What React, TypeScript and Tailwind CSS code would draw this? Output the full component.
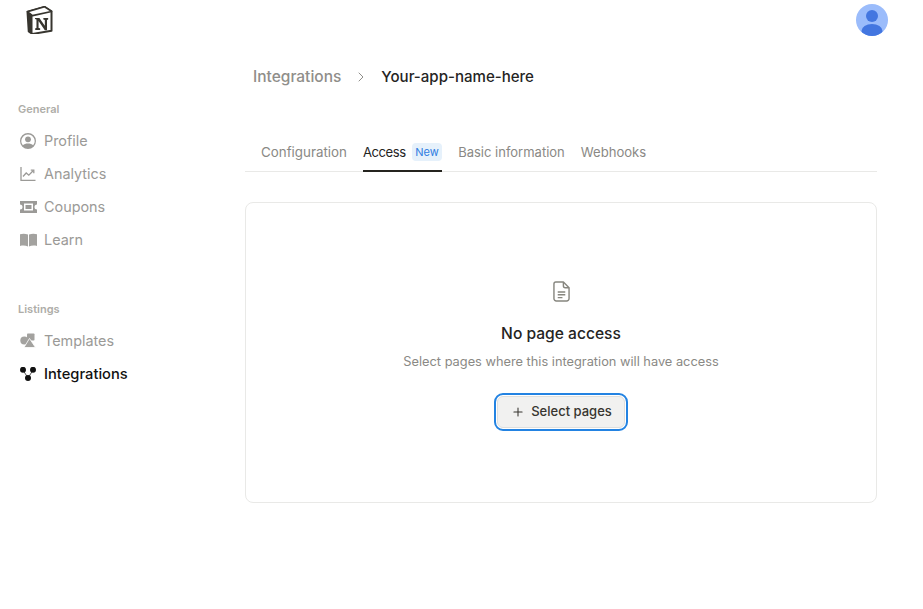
import { ChevronRight, Plus } from "lucide-react";
import type { ReactNode } from "react";

const font = { fontFamily: "Inter, 'Liberation Sans', sans-serif" };

function NotionLogo() {
  return (
    <svg viewBox="1.200 0.200 25 26.800" className="h-[28px] w-[27px]" aria-hidden>
      <path d="M2.200 5.600 18.600 1l6.600 4.400v18.400L7 27l-3.600-2.400z" fill="#fff" stroke="#37352f" strokeWidth="1.900" strokeLinejoin="round" />
      <path d="M2.200 5.600 7 9.400 25.200 5.400 18.600 1z" fill="#fff" stroke="#37352f" strokeWidth="1.500" strokeLinejoin="round" />
      <path d="M2.200 5.600 7 9.400V27l-3.600-2.400z" fill="#37352f" />
      <path d="M9.400 11.600h4.200l5.200 7.600v-5.700l-1.400-.3v-1.600h4.600v1.600l-1.100.3v10h-2.100l-6-8.900v6.600l1.500.4v1.500H9.600v-1.500l1.200-.4v-8.100l-1.400-.4z" fill="#37352f" />
    </svg>
  );
}

function ProfileIcon() {
  return (
    <svg viewBox="0 0 16 16" className="size-4" fill="#9b9a97" aria-hidden>
      <path fillRule="evenodd" d="M8 0a8 8 0 1 0 0 16A8 8 0 0 0 8 0Zm0 1.400a6.600 6.600 0 0 1 5.100 10.800C12 11 10.200 10.400 8 10.400s-4 .6-5.100 1.800A6.600 6.600 0 0 1 8 1.400Z" />
      <circle cx="8" cy="6.300" r="2.900" />
    </svg>
  );
}

function AnalyticsIcon() {
  return (
    <svg viewBox="0 0 16 16" className="size-4" fill="none" stroke="#9b9a97" strokeWidth="1.300" aria-hidden>
      <path d="M1 1v13.400h14.500" />
      <path d="M3 10.500 6.200 7l2.600 2.200 4.600-4.700" />
      <path d="M10.800 4.200h3v3" />
    </svg>
  );
}

function CouponIcon() {
  return (
    <svg viewBox="0 0 17 12" className="h-[12px] w-[17px]" aria-hidden>
      <path fillRule="evenodd" fill="#9b9a97" d="M0 0h17v3.500a2.500 2.500 0 0 0 0 5V12H0V8.500a2.500 2.500 0 0 0 0-5Zm4 2.500v7h9v-7Z" />
      <rect x="5.500" y="4" width="6" height="4" fill="#9b9a97" />
    </svg>
  );
}

function BookIcon() {
  return (
    <svg viewBox="0 0 17 14" className="h-[14px] w-[17px]" fill="#a3a29f" aria-hidden>
      <path d="M0 1.200C2.500.4 5.600.4 8 1.600v11.800c-2.400-1-5.500-1-8-.4Z" />
      <path d="M17 1.200C14.500.4 11.400.4 9 1.600v11.800c2.400-1 5.500-1 8-.4Z" />
    </svg>
  );
}

function TemplatesIcon() {
  return (
    <svg viewBox="0 0 16 15" className="h-[15px] w-4" fill="#a3a29f" aria-hidden>
      <circle cx="4.300" cy="7.500" r="4" />
      <rect x="7" y="0.500" width="7.500" height="7" rx="0.800" />
      <path d="M9.500 5.400 15.500 14.500H4z" stroke="#fff" strokeWidth="0.800" />
    </svg>
  );
}

function IntegrationsIcon() {
  return (
    <svg viewBox="0 0 16 14" className="h-[14px] w-4" aria-hidden>
      <path d="M2.800 2.800 8 11 13.200 2.800" stroke="#555" strokeWidth="1" fill="none" />
      <circle cx="3" cy="2.800" r="3" fill="#111" />
      <circle cx="13" cy="2.800" r="3" fill="#111" />
      <circle cx="8" cy="11" r="3" fill="#111" />
    </svg>
  );
}

function PageIcon() {
  return (
    <svg viewBox="0 0 18 22" className="h-[21px] w-[17px]" fill="none" stroke="#87867f" strokeWidth="1.500" strokeLinejoin="round" aria-hidden>
      <path d="M3 1h8l6 6v11.500a2.500 2.500 0 0 1-2.500 2.500h-11A2.500 2.500 0 0 1 1 18.500V3a2 2 0 0 1 2-2Z" />
      <path d="M11 1v4a2 2 0 0 0 2 2h4" />
      <path d="M5 11.500h8M5 14.500h8M5 17.500h5" />
    </svg>
  );
}

function Avatar() {
  return (
    <svg viewBox="0 0 32 32" className="size-8" aria-hidden>
      <defs>
        <clipPath id="avatar-clip">
          <circle cx="16" cy="16" r="16" />
        </clipPath>
      </defs>
      <circle cx="16" cy="16" r="16" fill="#9bbcfb" />
      <g clipPath="url(#avatar-clip)" fill="#4376e0">
        <circle cx="16" cy="12" r="6" />
        <ellipse cx="16" cy="27" rx="10.500" ry="7" />
      </g>
    </svg>
  );
}

function NavItem({ icon, label, active }: { icon: ReactNode; label: string; active?: boolean }) {
  return (
    <a className={`flex h-[33px] items-center gap-[7px] ${active ? "pt-[1px] text-[14.700px] font-medium text-[#111111]" : "text-[14.400px] text-[#9b9a97]"}`}>
      <span className="ml-[1px] flex w-[18px] shrink-0 justify-center">{icon}</span>
      {label}
    </a>
  );
}

function NavHeading({ children }: { children: ReactNode }) {
  return <div className="mb-[7px] flex h-[16px] items-center text-[11px] font-semibold text-[#aeada8]">{children}</div>;
}

export default function App() {
  return (
    <div className="flex min-h-screen flex-col bg-white" style={font}>
      <header className="flex h-[40px] items-center justify-between pl-[26px] pr-[35px]">
        <NotionLogo />
        <Avatar />
      </header>
      <div className="flex">
        <aside className="w-[245px] shrink-0 pl-[18px] pt-[61px]">
          <NavHeading>General</NavHeading>
          <NavItem icon={<ProfileIcon />} label="Profile" />
          <NavItem icon={<AnalyticsIcon />} label="Analytics" />
          <NavItem icon={<CouponIcon />} label="Coupons" />
          <NavItem icon={<BookIcon />} label="Learn" />
          <div className="h-[45px]" />
          <NavHeading>Listings</NavHeading>
          <NavItem icon={<TemplatesIcon />} label="Templates" />
          <NavItem icon={<IntegrationsIcon />} label="Integrations" active />
        </aside>
        <main className="w-[632px] shrink-0">
          <nav className="mt-[25px] flex h-[24px] items-center pl-[8px] font-medium">
            <span className="text-[15.500px] text-[#8f8e8a]">Integrations</span>
            <ChevronRight className="mx-[12px] size-4 text-[#8f8e8a]" strokeWidth={1.500} />
            <span className="text-[15.050px] text-[#25241f]">Your-app-name-here</span>
          </nav>
          <div className="mt-[44px] flex h-[39px] items-start gap-[16px] border-b border-[#e9e9e7] pl-[16px] leading-[20px]">
            <span className="pt-[9px] text-[13.350px] text-[#8a8985]">Configuration</span>
            <span className="flex h-[39px] items-start gap-[6px] border-b-2 border-[#25241f] pt-[9px] text-[#25241f]">
              <span className="text-[13.100px] tracking-[-0.450px]">Access</span>
              <span className="mt-[1px] h-[18px] rounded-[4px] bg-[#e6f1fb] px-[3.500px] text-[11px] leading-[18px] text-[#2f7de1]">New</span>
            </span>
            <span className="pt-[9px] text-[13px] text-[#8a8985]">Basic information</span>
            <span className="pt-[9px] text-[13.100px] text-[#8a8985]">Webhooks</span>
          </div>
          <section className="mt-[30px] flex h-[301px] flex-col items-center rounded-[8px] border border-[#e9e9e7] pt-[78px]">
            <PageIcon />
            <h2 className="mt-[20px] text-[15.600px] leading-[24px] font-medium text-[#25241f]">No page access</h2>
            <p className="mt-[6px] text-[12.800px] leading-[20px] text-[#8a8985]">Select pages where this integration will have access</p>
            <button className="mt-[24px] flex h-[32px] items-center gap-[6px] rounded-[6px] border border-[#dfdfdd] bg-[#f1f1f0] pl-[13px] pr-[12px] text-[13px] font-medium text-[#37352f] outline-2 outline-offset-1 outline-[#2383e2]">
              <Plus className="size-3.5" strokeWidth={1.800} />
              Select pages
            </button>
          </section>
        </main>
      </div>
    </div>
  );
}
